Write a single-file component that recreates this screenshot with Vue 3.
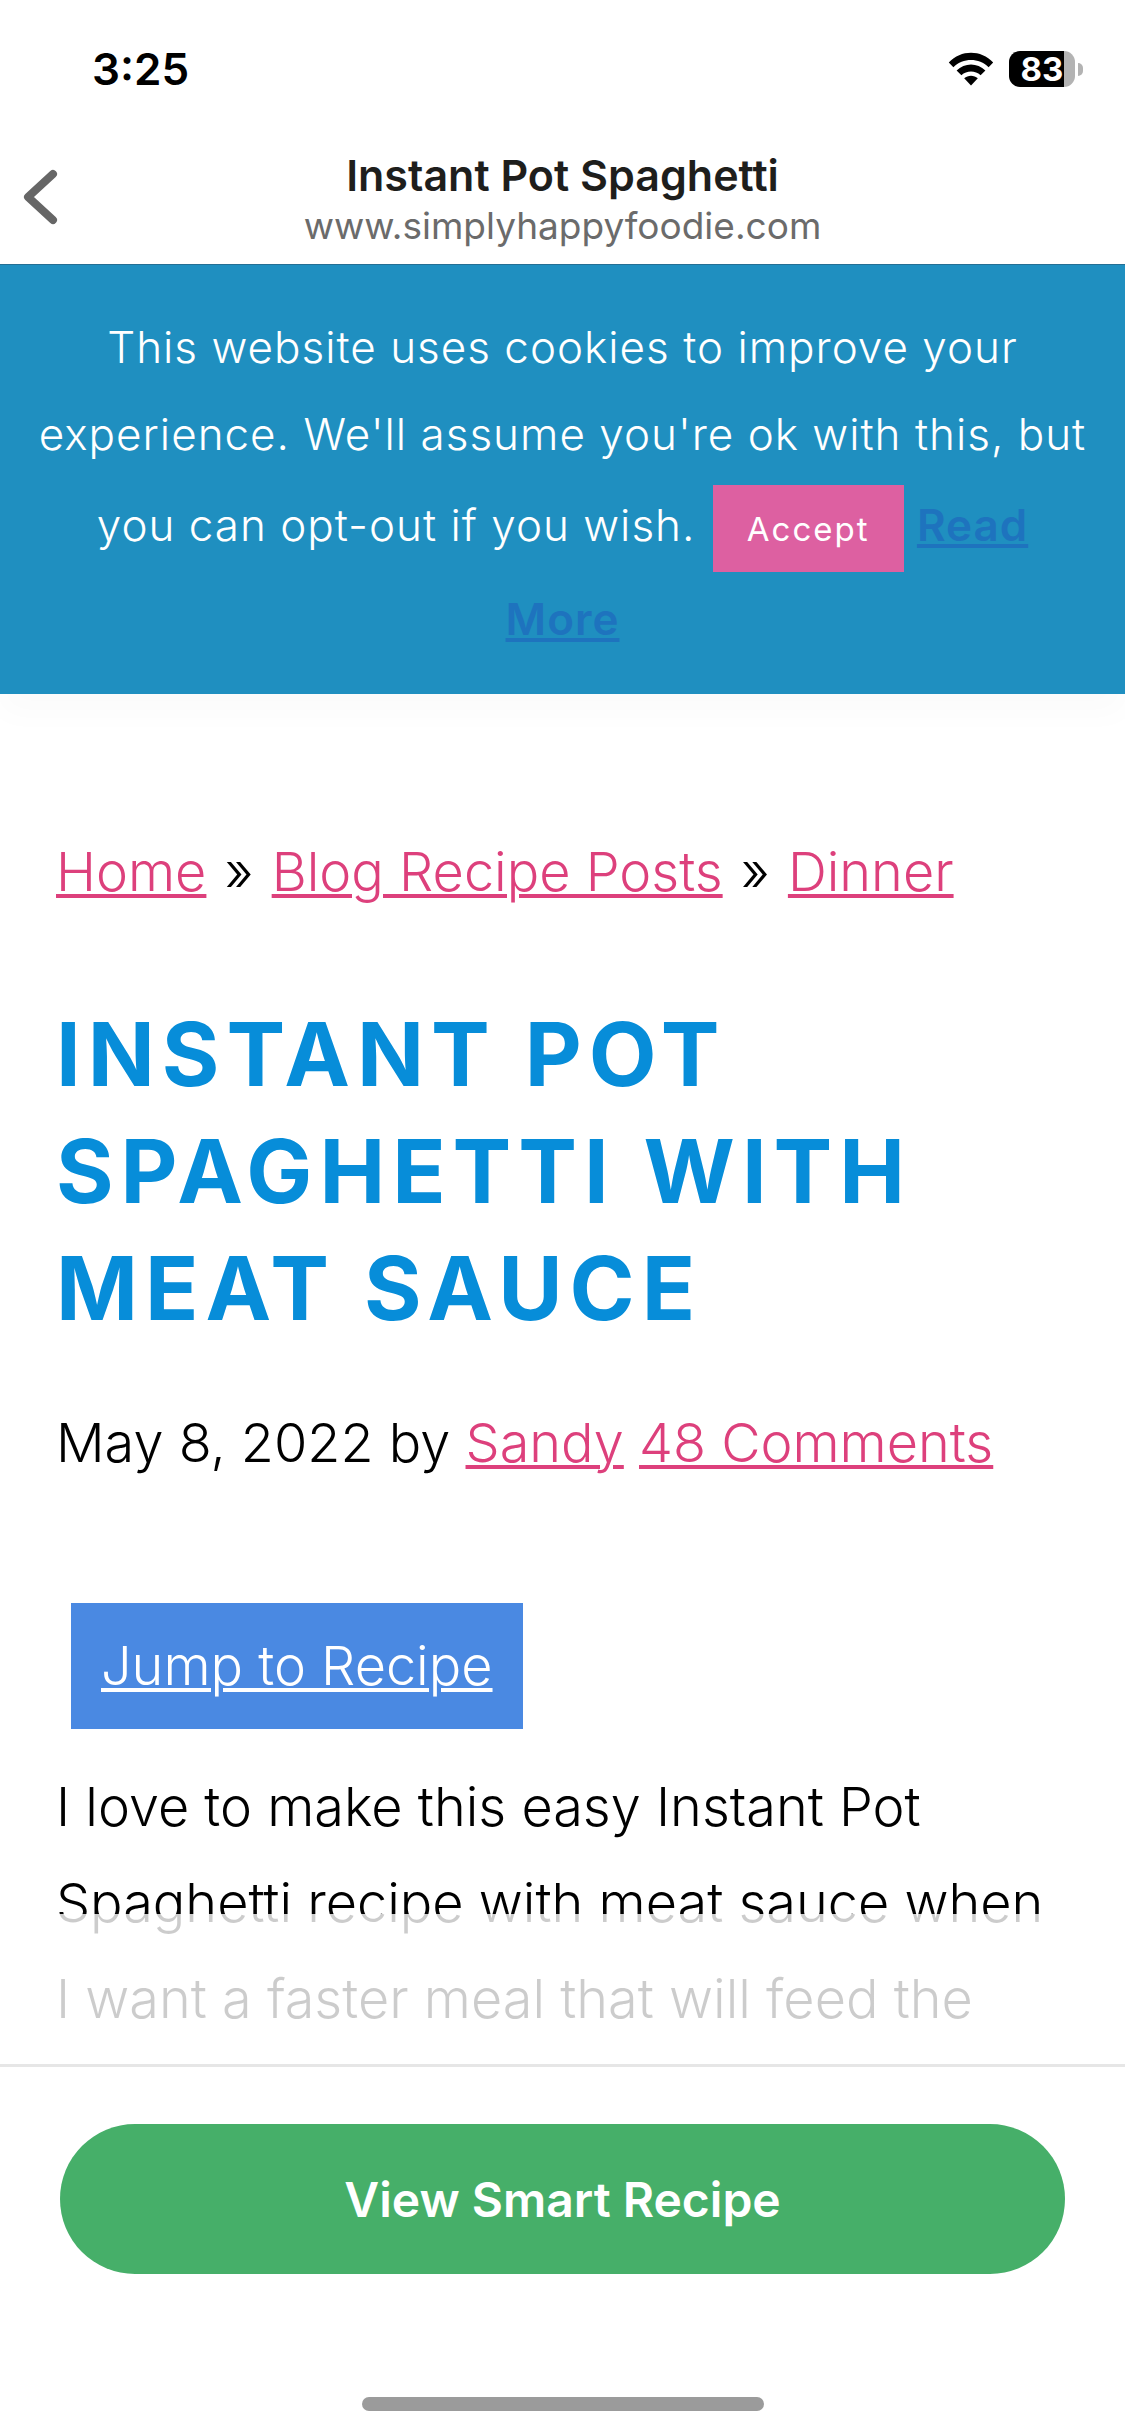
<script setup>
const article = {
  date: 'May 8, 2022',
  author: 'Sandy',
  comments: '48 Comments',
}
const crumbs = ['Home', 'Blog Recipe Posts', 'Dinner']
</script>

<template>
  <div class="screen">
    <div class="status">
      <time class="clock">3:25</time>
      <div class="indicators">
        <svg class="wifi" viewBox="0 0 46 34" role="img" aria-label="Wi-Fi">
          <path d="M0.8 10.6C13 -2.4 33 -2.4 45.2 10.6L40.6 15.2C31 5.6 15 5.6 5.4 15.2Z" />
          <path d="M8.6 18.4C16.6 10.4 29.4 10.4 37.4 18.4L32.6 23.2C27.2 18.4 18.8 18.4 13.4 23.2Z" />
          <path d="M16.2 26.2C20 22.8 26 22.8 29.8 26.2L23 33.4Z" />
        </svg>
        <div class="battery">
          <span class="battery-body">83</span>
          <span class="battery-tip"></span>
        </div>
      </div>
    </div>

    <header class="bar">
      <button class="back" type="button" aria-label="Back">
        <svg viewBox="0 0 36 56">
          <path d="M31 5L6 28L31 51" />
        </svg>
      </button>
      <div class="bar-text">
        <div class="bar-title">Instant Pot Spaghetti</div>
        <div class="bar-url">www.simplyhappyfoodie.com</div>
      </div>
    </header>

    <aside class="cookies">
      <p>
        This website uses cookies to improve your experience. We'll assume you're ok with this, but
        you can opt-out if you wish.
        <button class="accept" type="button">Accept</button> <a class="more" href="#">Read More</a>
      </p>
    </aside>

    <main class="article">
      <nav class="crumbs">
        <template v-for="(crumb, i) in crumbs" :key="crumb">
          <span v-if="i" class="sep"> » </span><a href="#">{{ crumb }}</a>
        </template>
      </nav>
      <h1>Instant Pot Spaghetti with Meat Sauce</h1>
      <p class="meta">
        {{ article.date }} by <a href="#">{{ article.author }}</a> <a href="#">{{ article.comments }}</a>
      </p>
      <a class="jump" href="#recipe">Jump to Recipe</a>
      <p class="body">
        I love to make this easy Instant Pot Spaghetti recipe with meat sauce when I want a faster
        meal that will feed the
      </p>
      <div class="veil"></div>
    </main>

    <footer class="sheet">
      <button class="view" type="button">View Smart Recipe</button>
      <div class="home"></div>
    </footer>
  </div>
</template>

<style>
body {
  background: #fff;
}
</style>

<style scoped>
.screen {
  display: flex;
  flex-direction: column;
  height: 100vh;
  overflow: hidden;
  font-family: Inter, "Liberation Sans", sans-serif;
  color: #000;
  background: #fff;
}
.status {
  display: flex;
  flex: none;
  justify-content: space-between;
  align-items: center;
  height: 138px;
  padding: 0 42px 0 92px;
}
.clock {
  font-size: 44px;
  font-weight: 600;
}
.indicators {
  display: flex;
  align-items: center;
  gap: 15px;
}
.wifi {
  width: 46px;
  height: 34px;
}
.battery {
  display: flex;
  align-items: center;
  gap: 3px;
}
.battery-body {
  width: 66px;
  height: 36px;
  border-radius: 11px;
  background: linear-gradient(90deg, #000 55px, #b3b3b3 55px);
  color: #fff;
  font-size: 33px;
  font-weight: 700;
  line-height: 36px;
  text-align: center;
}
.battery-tip {
  width: 5px;
  height: 13px;
  border-radius: 0 6px 6px 0;
  background: #b3b3b3;
}
.bar {
  display: grid;
  flex: none;
  grid-template-columns: 120px 1fr 120px;
  align-items: center;
  height: 127px;
  padding-bottom: 2px;
  border-bottom: 1px solid #256f94;
  box-sizing: border-box;
}
.back {
  display: flex;
  padding: 0 0 6px 22px;
  border: 0;
  background: none;
}
.back svg {
  width: 36px;
  height: 56px;
  fill: none;
  stroke: #666;
  stroke-width: 8;
  stroke-linecap: round;
  stroke-linejoin: round;
}
.bar-text {
  text-align: center;
}
.bar-title {
  font-size: 43px;
  font-weight: 600;
  line-height: 52px;
  color: #1e1e1c;
}
.bar-url {
  font-size: 37px;
  line-height: 50px;
  color: #6b6b6b;
}
.cookies {
  flex: none;
  padding: 39px 36px 31px;
  background: #1f8fc0;
  box-shadow: 0 20px 30px rgba(0, 0, 0, 0.02);
  color: #fff;
  font-size: 44px;
  font-weight: 300;
  line-height: 87px;
  letter-spacing: 1px;
  text-align: center;
}
.cookies p {
  margin: 0;
}
.accept {
  height: 87px;
  margin: 7px 0 4px 4px;
  padding: 0 34px;
  border: 0;
  background: #dd60a1;
  color: #fff;
  font-family: inherit;
  font-size: 33px;
  line-height: 40px;
  letter-spacing: 2px;
}
.more {
  color: #1e73be;
  font-weight: 600;
}
a {
  color: #dd407c;
  text-underline-offset: 3px;
  text-decoration-thickness: 4px;
}
.article {
  position: relative;
  flex: 1;
  min-height: 0;
  padding: 130px 56px 0;
  overflow: hidden;
  font-size: 54px;
  font-weight: 300;
  line-height: 96px;
}
.sep {
  margin: 0 3px;
}
h1 {
  margin: 76px 0 48px;
  color: #078dd9;
  font-size: 88px;
  font-weight: 700;
  line-height: 117px;
  letter-spacing: 7px;
  text-transform: uppercase;
}
.meta,
.body {
  margin: 0;
}
.jump {
  display: inline-block;
  margin: 112px 15px 30px;
  padding: 15px 30px;
  background: #4a89e2;
  color: #fff;
}
.veil {
  position: absolute;
  right: 0;
  bottom: 0;
  left: 0;
  height: 150px;
  background: rgba(255, 255, 255, 0.8);
}
.sheet {
  display: flex;
  flex: none;
  flex-direction: column;
  gap: 123px;
  padding: 57px 60px 25px;
  border-top: 3px solid #e6e6e6;
}
.view {
  height: 150px;
  border: 0;
  border-radius: 75px;
  background: #46af69;
  color: #fff;
  font-family: inherit;
  font-size: 48px;
  font-weight: 600;
}
.home {
  align-self: center;
  width: 402px;
  height: 14px;
  border-radius: 7px;
  background: #9b9b9b;
}
</style>
